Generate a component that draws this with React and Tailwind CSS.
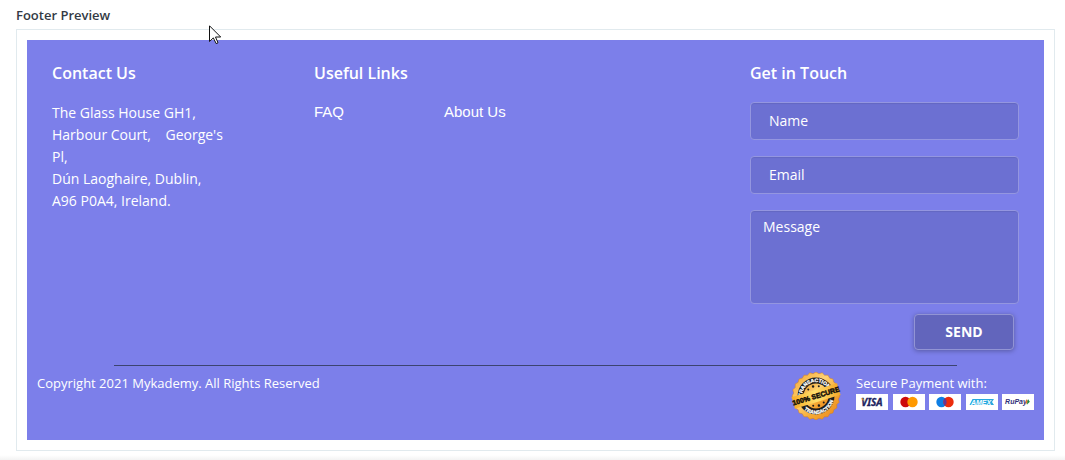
import React from "react";

const links = [
  { label: "FAQ", href: "#faq" },
  { label: "About Us", href: "#about" },
];

const headingStyles = "mb-4 text-base leading-[26px] font-semibold";

const fieldStyles =
  "block w-full rounded-sm border border-[#9496e0] bg-[#6c70d2] text-sm text-white placeholder:text-white placeholder:opacity-100 shadow-[inset_0_1px_1px_rgba(0,0,0,0.08)] outline-none focus:border-white";

function SecureSeal() {
  // scalloped edge of the badge
  const points = Array.from({ length: 48 }, (_, i) => {
    const r = i % 2 ? 45 : 48;
    const a = (i * Math.PI) / 24;
    return `${(50 + r * Math.cos(a)).toFixed(1)},${(50 + r * Math.sin(a)).toFixed(1)}`;
  }).join(" ");

  return (
    <svg viewBox="1 2 98 96" className="h-12 w-[50px] shrink-0" role="img" aria-label="100% secure transaction">
      <defs>
        <linearGradient id="gold" x1="0" y1="0" x2="1" y2="1">
          <stop offset="0" stopColor="#f0a02c" />
          <stop offset="0.4" stopColor="#ffd273" />
          <stop offset="0.65" stopColor="#f6a934" />
          <stop offset="1" stopColor="#e88318" />
        </linearGradient>
        <linearGradient id="band" x1="0" y1="0" x2="1" y2="0">
          <stop offset="0" stopColor="#f7ac27" />
          <stop offset="0.5" stopColor="#ffe06d" />
          <stop offset="1" stopColor="#f5a828" />
        </linearGradient>
        <path id="topArc" d="M 22 50 A 28 28 0 0 1 78 50" />
        <path id="bottomArc" d="M 14 50 A 36 36 0 0 0 86 50" />
      </defs>
      <polygon points={points} fill="url(#gold)" stroke="#d77f16" strokeWidth="1" />
      <circle cx="50" cy="50" r="37" fill="#201d1a" />
      <circle cx="50" cy="50" r="25" fill="url(#gold)" />
      <g transform="rotate(-17 50 50)" fontFamily="Liberation Sans, sans-serif" fontWeight="700" textAnchor="middle">
        <text fontSize="10" fill="#fff" stroke="#fff" strokeWidth="0.6">
          <textPath href="#topArc" startOffset="50%">TRANSACTION</textPath>
        </text>
        <text fontSize="10" fill="#fff" stroke="#fff" strokeWidth="0.6">
          <textPath href="#bottomArc" startOffset="50%">TRANSACTION</textPath>
        </text>
        <circle cx="39" cy="33" r="2" fill="#201d1a" />
        <circle cx="50" cy="30" r="2.5" fill="#201d1a" />
        <circle cx="61" cy="33" r="2" fill="#201d1a" />
        <circle cx="39" cy="67" r="2" fill="#201d1a" />
        <circle cx="50" cy="70" r="2.5" fill="#201d1a" />
        <circle cx="61" cy="67" r="2" fill="#201d1a" />
        <path d="M2 38 H98 L96 50 L98 62 H2 L4 50 Z" fill="url(#band)" />
        <text x="50" y="55" fontSize="14" fill="#17120a" stroke="#17120a" strokeWidth="1">
          100% SECURE
        </text>
      </g>
    </svg>
  );
}

function PaymentCard({ label, children }) {
  return (
    <svg viewBox="0 0 32 16" className="h-4 w-8" role="img" aria-label={label}>
      <rect width="32" height="16" fill="#fff" />
      {children}
    </svg>
  );
}

function PaymentCards() {
  return (
    <div className="flex justify-between">
      <PaymentCard label="Visa">
        <text x="16" y="12" textAnchor="middle" fontSize="10" fontWeight="700" fontStyle="italic" fontFamily="Noto Sans, sans-serif" fill="#20245f" stroke="#20245f" strokeWidth="0.3">
          VISA
        </text>
        <path d="M4.8 4.5 H7.2 L8.4 7.4 Q7 5.4 4.8 4.8 Z" fill="#f0a31c" />
      </PaymentCard>
      <PaymentCard label="Mastercard">
        <circle cx="12.5" cy="8" r="5.2" fill="#cc0a0a" />
        <circle cx="19.5" cy="8" r="5.2" fill="#ff9900" />
      </PaymentCard>
      <PaymentCard label="Maestro">
        <circle cx="12.5" cy="8" r="5.2" fill="#0d7ee4" />
        <circle cx="19.5" cy="8" r="5.2" fill="#eb2c0c" />
        <path d="M16 4.2 A5.2 5.2 0 0 1 16 11.8 A5.2 5.2 0 0 1 16 4.2 Z" fill="#653494" />
      </PaymentCard>
      <PaymentCard label="American Express">
        <path d="M6.5 5 H28 L26 8 L28 11 H3.5 Z" fill="#27a9df" />
        <text x="15" y="10.5" textAnchor="middle" fontSize="7" fontWeight="700" fontStyle="italic" fontFamily="Liberation Sans, sans-serif" fill="#fff">
          AMEX
        </text>
      </PaymentCard>
      <PaymentCard label="RuPay">
        <text x="14" y="10" textAnchor="middle" fontSize="7" fontWeight="700" fontStyle="italic" fontFamily="Liberation Sans, sans-serif" fill="#302f79">
          RuPay
        </text>
        <path d="M24.6 5 L26.4 7.8 L23.4 10.8 Z" fill="#f07c22" />
        <path d="M26 5 L27.8 7.8 L24.8 10.8 Z" fill="#168b48" />
      </PaymentCard>
    </div>
  );
}

function Cursor() {
  return (
    <svg viewBox="0 0 13 20" className="pointer-events-none absolute left-[209px] top-[25px] h-5 w-[13px]" aria-hidden="true">
      <path d="M0.5 0.8 V16.5 L4.3 12.9 L7.2 18.6 L9 17.8 L6.5 12 H11.7 Z" fill="#fff" stroke="#111" strokeWidth="1" />
    </svg>
  );
}

export default function App() {
  return (
    <div className="relative bg-white font-['Open_Sans',sans-serif]">
      <main className="pt-1 pr-[10px] pb-1 pl-4">
        <h1 className="mb-[3px] text-[13px] leading-[22px] font-semibold text-[#333a45]">Footer Preview</h1>

        <div className="border border-[#e1eaee] p-[10px]">
          <footer className="bg-[#7c7fea] pt-5 pb-5 text-white">
            <div className="grid grid-cols-[262fr_436fr_269fr] px-[25px]">
              {/* Contact */}
              <section>
                <h2 className={headingStyles}>Contact Us</h2>
                <address className="text-sm leading-[22px] not-italic">
                  The Glass House GH1,
                  <br />
                  Harbour Court, &nbsp;&nbsp; George's
                  <br />
                  Pl,
                  <br />
                  Dún Laoghaire, Dublin,
                  <br />
                  A96 P0A4, Ireland.
                </address>
              </section>

              {/* Links */}
              <section>
                <h2 className={headingStyles}>Useful Links</h2>
                <ul className="flex font-['Liberation_Sans',sans-serif] text-[15px] leading-5">
                  {links.map((link) => (
                    <li key={link.label} className="w-[130px]">
                      <a href={link.href} className="hover:underline">{link.label}</a>
                    </li>
                  ))}
                </ul>
              </section>

              {/* Contact form */}
              <section>
                <h2 className={headingStyles}>Get in Touch</h2>
                <form onSubmit={(e) => e.preventDefault()}>
                  <input type="text" aria-label="Name" placeholder="Name" className={`${fieldStyles} mb-4 h-[38px] px-[18px] pb-[2px]`} />
                  <input type="email" aria-label="Email" placeholder="Email" className={`${fieldStyles} mb-4 h-[38px] px-[18px] pb-[2px]`} />
                  <textarea aria-label="Message" placeholder="Message" className={`${fieldStyles} mb-[10px] h-[94px] resize-none px-3 py-[6px]`} />
                  <div className="flex justify-end pr-[5px]">
                    <button
                      type="submit"
                      className="h-9 w-[100px] rounded-sm border border-[#9294d4] bg-[#6265bc] text-sm font-bold text-white shadow-[0_1px_5px_rgba(0,0,0,0.3)] hover:bg-[#585bb0]"
                    >
                      SEND
                    </button>
                  </div>
                </form>
              </section>
            </div>

            <hr className="mx-[87px] mt-[15px] border-t border-[#3c4470]" />

            {/* Bottom bar */}
            <div className="flex items-start justify-between px-[10px] pt-[6px]">
              <p className="text-[13px] leading-[22px]">Copyright 2021 Mykademy. All Rights Reserved</p>
              <div className="flex gap-[15px]">
                <SecureSeal />
                <div className="w-[178px]">
                  <p className="text-[13px] leading-[22px]">Secure Payment with:</p>
                  <PaymentCards />
                </div>
              </div>
            </div>
          </footer>
        </div>
      </main>
      <div className="h-[5px] bg-gradient-to-b from-white to-[#f3f3f3]" />
      <Cursor />
    </div>
  );
}
